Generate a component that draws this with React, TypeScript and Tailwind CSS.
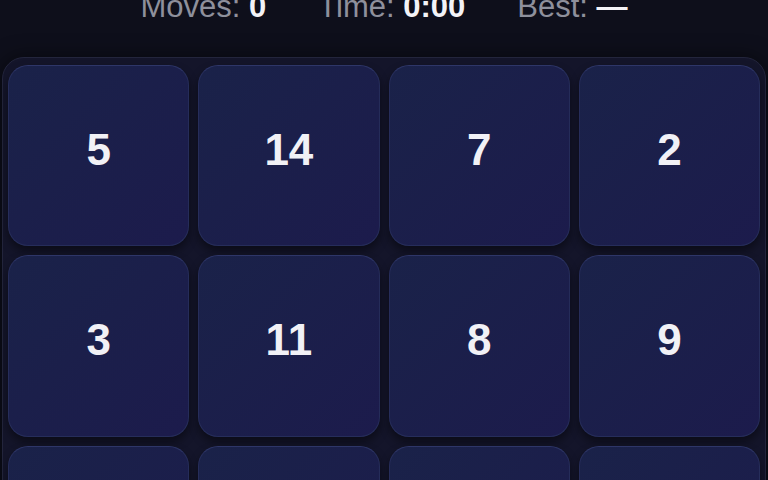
const tiles = [5, 14, 7, 2, 3, 11, 8, 9, 12, 1, 4, 6, 10, 13, 15, null];

const Stat = ({ label, value }: { label: string; value: string }) => (
  <div className="whitespace-pre">
    <span className="text-[#8e909c]">{label} </span>
    <span className="font-bold text-[#f3f3f7]">{value}</span>
  </div>
);

export default function App() {
  return (
    <div
      className="w-[768px] h-[480px] overflow-hidden bg-[#0e0f1b]"
      style={{ fontFamily: '"Liberation Sans", Arial, sans-serif' }}
    >
      <div className="flex justify-center gap-[52px] text-[31px] leading-[30px] mt-[-8px]">
        <Stat label="Moves:" value="0" />
        <Stat label="Time:" value="0:00" />
        <Stat label="Best:" value="—" />
      </div>
      <div className="mt-[35px] mx-[2px] rounded-[22px] border border-[#23253c] bg-[#14152a] px-[5px] pt-[7px] pb-[8px] shadow-[0_0_20px_rgba(0,0,0,0.5)]">
        <div className="grid grid-cols-4 gap-x-[9px] gap-y-[9px]">
          {tiles.map((n, i) => (
            <div
              key={i}
              className={
                n === null
                  ? "aspect-square rounded-[20px]"
                  : "aspect-square rounded-[20px] border border-[#262d5a] border-t-[#2e3668] bg-gradient-to-br from-[#1a2249] to-[#1c1b4c] shadow-[0_5px_10px_rgba(0,0,0,0.45)] flex items-center justify-center pb-3"
              }
            >
              {n !== null && (
                <span className="text-[44px] font-bold text-[#f1f1f6]">{n}</span>
              )}
            </div>
          ))}
        </div>
      </div>
    </div>
  );
}
